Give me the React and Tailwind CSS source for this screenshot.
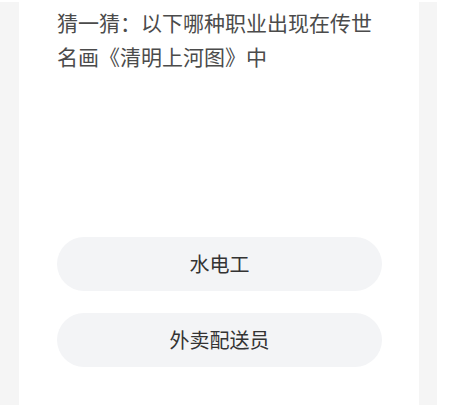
import React from "react";

const options = ["水电工", "外卖配送员"];

export default function App() {
  return (
    <div
      className="flex h-[407px] w-[474px] bg-white py-[2px]"
      style={{ fontFamily: '"Noto Sans CJK SC", "Noto Sans", sans-serif' }}
    >
      <div className="w-[19px] bg-[#f5f5f5]" />
      <div className="flex w-[400px] flex-col bg-white px-[38px] pt-[3px]">
        <p className="text-[21px] leading-[34px] text-[#4b4b4b]">
          猜一猜：以下哪种职业出现在传世名画《清明上河图》中
        </p>
        <div className="mt-[164px] flex flex-col gap-[22px]">
          {options.map((opt) => (
            <button
              key={opt}
              className="flex h-[54px] w-[325px] items-center justify-center rounded-full bg-[#f3f4f6] text-[20px] text-[#333]"
            >
              {opt}
            </button>
          ))}
        </div>
      </div>
      <div className="w-[18px] bg-[#f5f5f5]" />
      <div className="flex-1 bg-white" />
    </div>
  );
}
